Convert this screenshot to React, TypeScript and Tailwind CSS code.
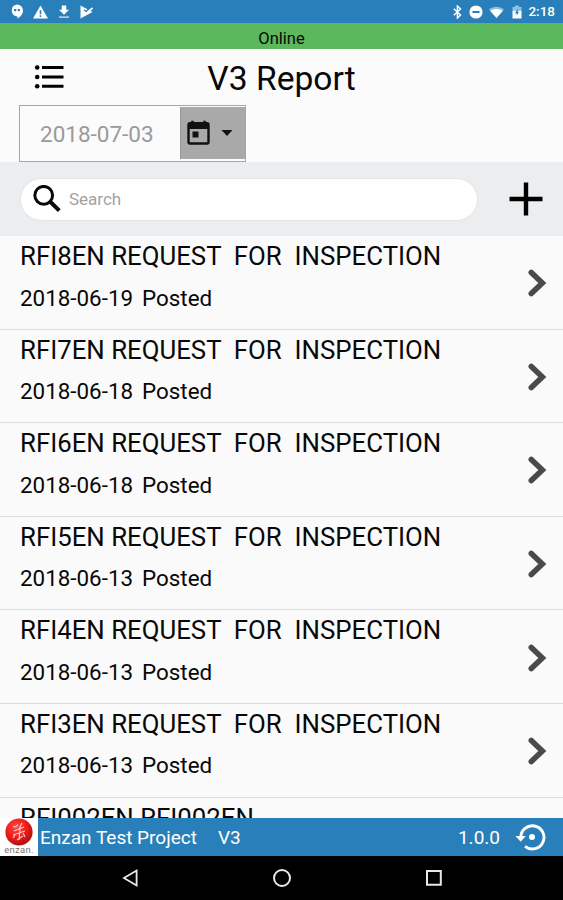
type Report = {
  title: string;
  date?: string;
  status?: string;
};

const reports: Report[] = [
  { title: "RFI8EN REQUEST  FOR  INSPECTION", date: "2018-06-19", status: "Posted" },
  { title: "RFI7EN REQUEST  FOR  INSPECTION", date: "2018-06-18", status: "Posted" },
  { title: "RFI6EN REQUEST  FOR  INSPECTION", date: "2018-06-18", status: "Posted" },
  { title: "RFI5EN REQUEST  FOR  INSPECTION", date: "2018-06-13", status: "Posted" },
  { title: "RFI4EN REQUEST  FOR  INSPECTION", date: "2018-06-13", status: "Posted" },
  { title: "RFI3EN REQUEST  FOR  INSPECTION", date: "2018-06-13", status: "Posted" },
  { title: "RFI002EN RFI002EN" },
];

function StatusBar() {
  return (
    <div className="flex h-[23px] shrink-0 items-center justify-between bg-[#297fb9] pr-2 pl-[10px] text-white">
      <div className="flex items-center gap-[9px]">
        <svg className="h-[15px] w-[14px]" viewBox="0 0 14 15">
          <path d="M7 .5a6 6 0 0 1 6 6c0 3.600-2.500 6.500-5.500 8v-2.100H7a6 6 0 0 1 0-11.900z" fill="currentColor" />
          <path d="M4 5h2.300v1.600L5 7.800V7H4zM7.700 5H10v1.600L8.700 7.800V7h-1z" fill="#297fb9" />
        </svg>
        <svg className="h-[14px] w-[15px]" viewBox="0 0 15 14">
          <path d="M7.500.5 15 13.500H0z" fill="currentColor" />
          <path d="M6.700 5.200h1.600v4H6.700zM6.700 10.300h1.600v1.600H6.700z" fill="#297fb9" />
        </svg>
        <svg className="ml-[1px] h-[14px] w-[12px]" viewBox="0 0 12 14">
          <path d="M3.800.5h4.400v4.300H11l-5 5-5-5h2.800z" fill="currentColor" />
          <path d="M1 11.300h10v1.700H1z" fill="#b9cdea" />
        </svg>
        <svg className="ml-[1px] h-[14px] w-[13px]" viewBox="0 0 13 14">
          <path d="M.5.600 12.500 7 .5 13.500z" fill="currentColor" />
          <path d="m4 4.800 2 2L11.500 1.500" fill="none" stroke="#297fb9" strokeWidth="1.600" />
          <path d="m3.500 6.300 2.500 2.300L12.500 3" fill="none" stroke="currentColor" strokeWidth="1.900" />
        </svg>
      </div>
      <div className="flex items-center">
        <svg className="mr-[7px] h-[14px] w-[9px]" viewBox="0 0 9 14" fill="none" stroke="currentColor" strokeWidth="1.500">
          <path d="M.8 3.700 7.500 10 4.400 13V1l3.100 3L.8 10.300" />
        </svg>
        <svg className="mr-[6px] h-[14px] w-[14px]" viewBox="0 0 14 14">
          <circle cx="7" cy="7" r="6.600" fill="currentColor" />
          <path d="M3.500 6h7v2h-7z" fill="#297fb9" />
        </svg>
        <svg className="mr-[8px] h-[12px] w-[15px]" viewBox="0 0 15 12">
          <path d="M0 3.500C4-.3 11-.3 15 3.500L7.500 12z" fill="#8fbddd" />
          <path d="M1.300 4.900c3.700-2.500 8.700-2.500 12.400 0L7.500 12z" fill="currentColor" />
        </svg>
        <svg className="mr-[6px] h-[14px] w-[10px]" viewBox="0 0 10 14">
          <path d="M3 .5h4v1.400h2.500v4H.5v-4H3z" fill="#94c0df" />
          <path d="M.5 5.900h9v7.600h-9z" fill="currentColor" />
          <path d="M5.700 3.500 3 8.300h1.700v2.200L7 7H5.700z" fill="#297fb9" />
        </svg>
        <span className="pt-[1px] text-[13.500px] leading-none font-medium">2:18</span>
      </div>
    </div>
  );
}

function Header() {
  return (
    <header className="h-[113px] shrink-0 bg-[#fbfbfb] px-[19px]">
      <div className="grid h-[56px] grid-cols-[60px_1fr_60px] items-center">
        <svg className="ml-[15px] h-[26px] w-[31px]" viewBox="0 0 31 26">
          <g fill="#000">
            <circle cx="3.200" cy="3.500" r="2.300" />
            <circle cx="3.200" cy="13" r="2.300" />
            <circle cx="3.200" cy="22.300" r="2.300" />
            <path d="M8 2h21.500v3H8zM8 11.500h21.500v3H8zM8 20.800h21.500v3H8z" />
          </g>
        </svg>
        <h1 className="pt-[3px] text-center text-[33.600px] leading-none whitespace-nowrap">V3 Report</h1>
      </div>
      <div className="flex h-[57px] w-[227px] border border-[#a6a6a6]">
        <div className="flex flex-1 items-center pt-[2px] pl-[20px] text-[22.500px] text-[#9a9a9a]">2018-07-03</div>
        <button className="mt-[1px] mb-[2px] flex w-[65px] items-center border-l border-[#999] bg-[#a9a9a9] pl-[6px]">
          <svg className="mb-[2px] h-[25px] w-[23px]" viewBox="0 0 23 25">
            <path d="M3 3.300h17a1.500 1.500 0 0 1 1.500 1.500V22a1.500 1.500 0 0 1-1.500 1.500H3A1.500 1.500 0 0 1 1.500 22V4.800A1.500 1.500 0 0 1 3 3.300z" fill="none" stroke="#111" strokeWidth="2.400" />
            <path d="M1 3h21v6H1zM4.200.8h2.500V4H4.200zM16.300.8h2.500V4h-2.500zM5.500 11.500h6v6h-6z" fill="#111" />
          </svg>
          <svg className="ml-[11px] h-[6px] w-[12px]" viewBox="0 0 12 6">
            <path d="M.5 0h11L6 6z" fill="#111" />
          </svg>
        </button>
      </div>
    </header>
  );
}

function SearchBar() {
  return (
    <div className="flex h-[74px] shrink-0 items-center justify-between bg-[#ebedee] pr-[20px] pl-[20px]">
      <div className="flex h-[43px] w-[458px] items-center rounded-full border border-[#e2e4e5] bg-white pl-[12px]">
        <svg className="mb-[1px] h-[28px] w-[29px]" viewBox="0 0 29 28" fill="none" stroke="#0a0a0a">
          <circle cx="10.700" cy="10.300" r="8.900" strokeWidth="3" />
          <path d="m17 16.500 9.300 9.100" strokeWidth="4" />
        </svg>
        <span className="ml-[7px] pt-[1px] text-[17px] text-[#a3a3a3]">Search</span>
      </div>
      <svg className="h-[34px] w-[34px]" viewBox="0 0 34 34">
        <path d="M14.800.5h4.400v14.300h14.300v4.400H19.200v14.300h-4.400V19.200H.5v-4.400h14.300z" fill="#000" />
      </svg>
    </div>
  );
}

function ReportRow({ report }: { report: Report }) {
  return (
    <li className="flex h-[93.600px] items-center justify-between border-b border-[#dcdcdc] pr-[16px] pl-[20px]">
      <div className="h-full">
        <p className="pt-[5px] text-[25.800px] leading-[30px] whitespace-pre">{report.title}</p>
        {report.date && (
          <p className="flex gap-[9px] pt-[12.500px] text-[22.400px] leading-[28px]">
            <span>{report.date}</span>
            <span>{report.status}</span>
          </p>
        )}
      </div>
      <svg className="mt-[2px] h-[30px] w-[20px]" viewBox="0 0 20 30" fill="none" stroke="#4a4a4a" strokeWidth="5.600" strokeLinecap="round">
        <path d="m4.300 4.500 11 10.500-11 10.500" />
      </svg>
    </li>
  );
}

function Footer() {
  return (
    <footer className="flex h-[38px] shrink-0 items-center bg-[#297fb9] text-[19px] leading-[24px] text-white">
      <div className="flex h-full w-[38px] flex-col items-center bg-white">
        <svg className="h-[28px] w-[28px] shrink-0" viewBox="0 0 28 28">
          <defs>
            <radialGradient id="ball" cx="40%" cy="32%" r="65%">
              <stop offset="0" stopColor="#ff4a42" />
              <stop offset=".6" stopColor="#ef1a1a" />
              <stop offset="1" stopColor="#b01414" />
            </radialGradient>
          </defs>
          <circle cx="14" cy="14" r="13.600" fill="url(#ball)" />
          <path d="M8 8.500c2 1 4-.5 5-2M17 5l-3 6M9 13l10-4M8 17l12-4M15 11l-1 11M18 15l2 4M10 17l-2 3M12 22l6-4" fill="none" stroke="#ffc4bd" strokeWidth="1.200" />
        </svg>
        <span className="text-[9.500px] leading-[8px] tracking-[0.300px] text-[#7b7270]">enzan.</span>
      </div>
      <span className="ml-[2px] w-[178px] pt-[2px] whitespace-nowrap">Enzan Test Project</span>
      <span className="pt-[2px]">V3</span>
      <span className="mr-[15px] ml-auto pt-[2px]">1.0.0</span>
      <svg className="mr-[17px] h-[28px] w-[31px]" viewBox="0 0 31 28">
        <path d="M5.800 15A11.600 11.600 0 1 1 10 23.300" fill="none" stroke="currentColor" strokeWidth="2.900" />
        <path d="M.5 13h10.300l-5.100 5.800z" fill="currentColor" />
        <circle cx="17" cy="14" r="3" fill="currentColor" />
      </svg>
    </footer>
  );
}

function NavBar() {
  return (
    <nav className="flex h-[44px] shrink-0 items-center bg-black pl-[121px]">
      <svg className="h-[20px] w-[18px]" viewBox="0 0 18 20" fill="none" stroke="#e8e8e8" strokeWidth="1.800">
        <path d="M15.600 2.500v15L3 10z" />
      </svg>
      <svg className="ml-[133px] h-[20px] w-[20px]" viewBox="0 0 20 20" fill="none" stroke="#e8e8e8" strokeWidth="2">
        <circle cx="10" cy="10" r="8" />
      </svg>
      <svg className="ml-[132px] h-[20px] w-[20px]" viewBox="0 0 20 20" fill="none" stroke="#e8e8e8" strokeWidth="2">
        <path d="M3 3h13.800v13.800H3z" />
      </svg>
    </nav>
  );
}

export default function App() {
  return (
    <div className="flex h-[900px] w-[563px] flex-col overflow-hidden bg-[#fafafa] font-['Roboto',sans-serif] text-[#080808]">
      <StatusBar />
      <div className="h-[26px] shrink-0 bg-[#5cb85c] pt-[4px] text-center text-[16.500px] leading-[23px]">Online</div>
      <Header />
      <SearchBar />
      <ul className="min-h-0 flex-1 overflow-hidden">
        {reports.map((report) => (
          <ReportRow key={report.title} report={report} />
        ))}
      </ul>
      <Footer />
      <NavBar />
    </div>
  );
}
